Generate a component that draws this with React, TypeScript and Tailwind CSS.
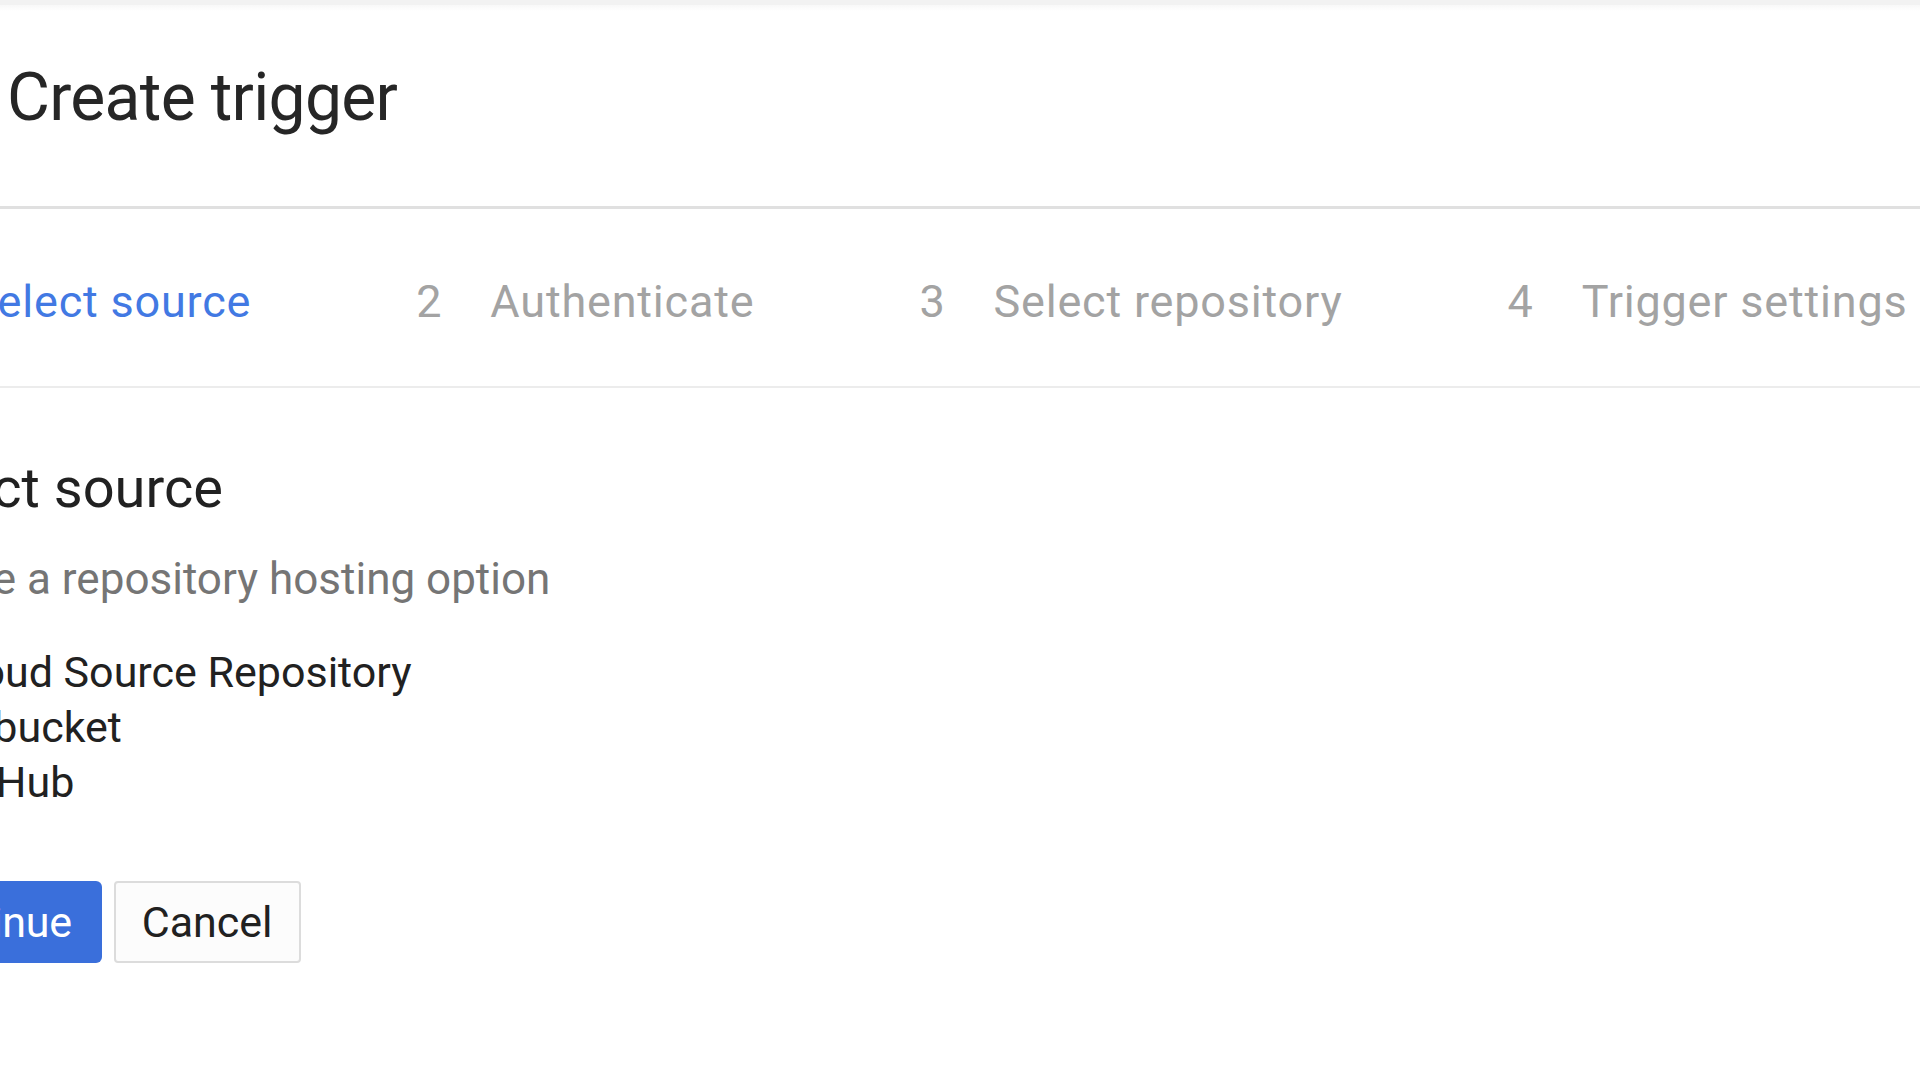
import React from 'react';

const steps = [
  { n: '1', label: 'Select source', active: true },
  { n: '2', label: 'Authenticate', active: false },
  { n: '3', label: 'Select repository', active: false },
  { n: '4', label: 'Trigger settings', active: false },
];

const sources = ['Cloud Source Repository', 'Bitbucket', 'GitHub'];

export default function App() {
  return (
    <div className="h-[1079px] w-[1920px] overflow-hidden bg-white font-['Roboto',_sans-serif]">
      {/* top bar edge */}
      <div className="h-[5px] bg-[#f2f2f2]" />
      <div className="h-[6px] bg-gradient-to-b from-[#f8f8f8] to-white" />

      {/* header */}
      <div className="h-[195px] pl-[7px] pt-[54px]">
        <h1 className="text-[66px] leading-[66px] tracking-[-0.7px] text-[#262626]">Create trigger</h1>
      </div>
      <div className="h-[3px] bg-[#e0e0e0]" />

      {/* stepper */}
      <div className="flex h-[177px] items-center pt-[8px]">
        <div className="ml-[-104px] flex items-baseline gap-[165px] text-[45px] leading-none tracking-[0.8px]">
          {steps.map((s) => (
            <div
              key={s.n}
              className={
                s.active
                  ? 'flex items-baseline gap-[48px] whitespace-nowrap text-[#4279e3]'
                  : 'flex items-baseline gap-[48px] whitespace-nowrap text-[#a3a3a3]'
              }
            >
              <span>{s.n}</span>
              <span>{s.label}</span>
            </div>
          ))}
        </div>
      </div>
      <div className="h-[2px] bg-[#ececec]" />

      {/* content */}
      <div className="ml-[-112px] pt-[70px]">
        <h2 className="ml-[-2px] text-[56px] leading-[60px] text-[#212121]">Select source</h2>
        <p className="ml-[-21px] mt-[36px] text-[44px] leading-[50px] text-[#757575]">
          Choose a repository hosting option
        </p>
        <div className="mt-[41px] flex flex-col">
          {sources.map((s) => (
            <label key={s} className="flex h-[55px] items-center gap-[20px] text-[43px] text-[#212121]">
              <span className="h-[34px] w-[34px] rounded-full border-[3px] border-[#757575]" />
              <span>{s}</span>
            </label>
          ))}
        </div>
        <div className="ml-[-13px] mt-[71px] flex gap-[12px]">
          <button className="h-[82px] rounded-[6px] bg-[#3a6fdb] pl-[28px] pr-[30px] text-[43px] tracking-[-0.3px] text-white">
            Continue
          </button>
          <button className="h-[82px] rounded-[4px] border-2 border-[#dcdcdc] bg-[#fcfcfc] px-[26px] text-[43px] text-[#212121]">
            Cancel
          </button>
        </div>
      </div>
    </div>
  );
}
